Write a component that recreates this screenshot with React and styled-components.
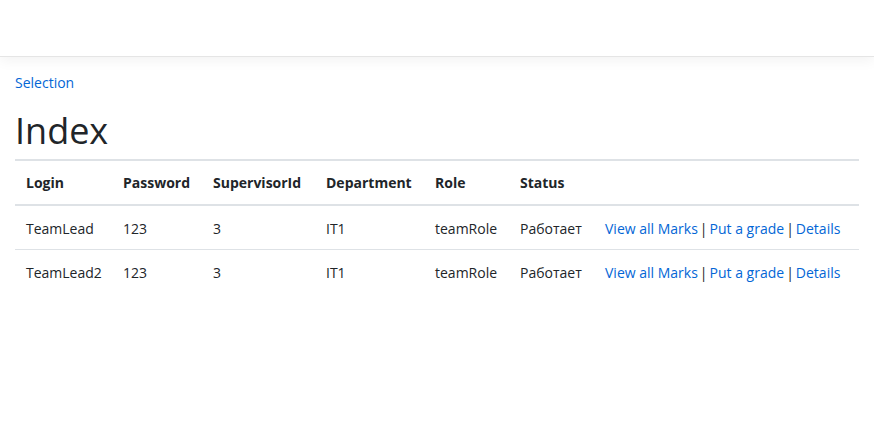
import React from 'react';
import styled, { createGlobalStyle } from 'styled-components';

const GlobalStyle = createGlobalStyle`
  html, body {
    margin: 0;
    background: #fff;
  }
  body {
    font-family: 'Open Sans', 'Noto Sans', sans-serif;
    font-size: 14px;
    color: #212529;
  }
`;

const columns = [
  { key: 'login', title: 'Login', width: 97 },
  { key: 'password', title: 'Password', width: 90 },
  { key: 'supervisorId', title: 'SupervisorId', width: 113 },
  { key: 'department', title: 'Department', width: 109 },
  { key: 'role', title: 'Role', width: 85 },
  { key: 'status', title: 'Status', width: 85 },
];

const rows = [
  { login: 'TeamLead', password: '123', supervisorId: '3', department: 'IT1', role: 'teamRole', status: 'Работает' },
  { login: 'TeamLead2', password: '123', supervisorId: '3', department: 'IT1', role: 'teamRole', status: 'Работает' },
];

export default function App() {
  return (
    <>
      <GlobalStyle />
      <Navbar />
      <Container>
        <Crumb>
          <Link href="#">Selection</Link>
        </Crumb>
        <Title>Index</Title>
        <Table>
          <colgroup>
            {columns.map((c) => (
              <col key={c.key} style={{ width: c.width }} />
            ))}
            <col />
          </colgroup>
          <thead>
            <tr>
              {columns.map((c) => (
                <HeadCell key={c.key}>{c.title}</HeadCell>
              ))}
              <HeadCell />
            </tr>
          </thead>
          <tbody>
            {rows.map((r) => (
              <tr key={r.login}>
                {columns.map((c) => (
                  <Cell key={c.key}>{r[c.key]}</Cell>
                ))}
                <Cell>
                  <Link href="#">View all Marks</Link>
                  <Sep>|</Sep>
                  <Link href="#">Put a grade</Link>
                  <Sep>|</Sep>
                  <Link href="#">Details</Link>
                </Cell>
              </tr>
            ))}
          </tbody>
        </Table>
      </Container>
    </>
  );
}

const Navbar = styled.header`
  height: 56px;
  background: #fff;
  border-bottom: 1px solid #e5e5e5;
  box-shadow: 0 4px 12px rgba(0, 0, 0, 0.05);
`;

const Container = styled.main`
  padding: 15px 15px 0;
`;

const Crumb = styled.div`
  line-height: 22px;
`;

const Link = styled.a`
  color: #0366d6;
  text-decoration: none;
`;

const Sep = styled.span`
  margin: 0 2px;
`;

const Title = styled.h1`
  margin: 17px 0 8px;
  font-size: 36px;
  font-weight: 500;
  line-height: 40px;
  color: #212529;
`;

const Table = styled.table`
  width: 844px;
  border-collapse: collapse;
  table-layout: fixed;
  border-top: 2px solid #dee2e6;
`;

const HeadCell = styled.th`
  padding: 12px 11px 11px;
  text-align: left;
  font-weight: 700;
  line-height: 20px;
  border-bottom: 2px solid #dee2e6;
  white-space: nowrap;
`;

const Cell = styled.td`
  padding: 13px 11px 10px;
  line-height: 20px;
  border-top: 1px solid #dee2e6;
  white-space: nowrap;
  tr:first-child > & {
    border-top: none;
  }
`;
